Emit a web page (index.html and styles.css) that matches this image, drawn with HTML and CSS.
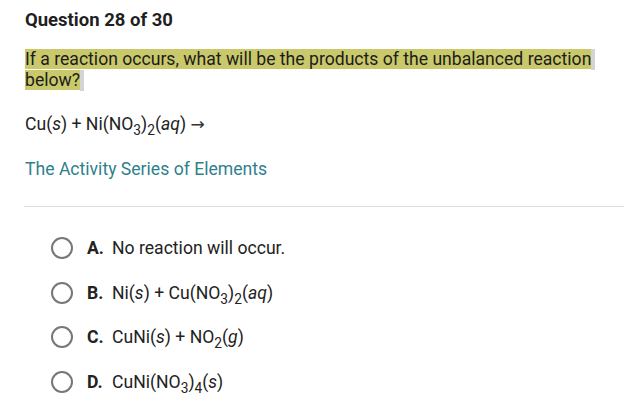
FILE: index.html
```html
<!DOCTYPE html>
<html>
<head>
<meta charset="utf-8">
<link rel="stylesheet" href="styles.css">
</head>
<body>
<div class="page">
  <h1 class="title">Question 28 of 30</h1>
  <p class="prompt"><span class="hl">If a reaction occurs, what will be the products of the unbalanced reaction</span><span class="tail"></span><br><span class="hl">below?</span><span class="tail"></span></p>
  <p class="eq">Cu(<i>s</i>) + Ni(NO<sub>3</sub>)<sub>2</sub>(<i>aq</i>) <span class="arrow">→</span></p>
  <p class="link">The Activity Series of Elements</p>
</div>
<hr class="divider">
<ul class="options">
  <li class="opt"><span class="radio"></span><b class="letter">A.</b><span>No reaction will occur.</span></li>
  <li class="opt"><span class="radio"></span><b class="letter">B.</b><span>Ni(<i>s</i>) + Cu(NO<sub>3</sub>)<sub>2</sub>(<i>aq</i>)</span></li>
  <li class="opt"><span class="radio"></span><b class="letter">C.</b><span>CuNi(<i>s</i>) + NO<sub>2</sub>(<i>g</i>)</span></li>
  <li class="opt"><span class="radio"></span><b class="letter">D.</b><span>CuNi(NO<sub>3</sub>)<sub>4</sub>(<i>s</i>)</span></li>
</ul>
</body>
</html>
```
FILE: styles.css
```css
html, body {
  margin: 0;
  padding: 0;
  background: #fff;
}
body {
  font-family: Roboto, "Noto Sans", sans-serif;
  color: #222;
  width: 624px;
  height: 420px;
  overflow: hidden;
}
.page {
  padding: 9px 0 0 25px;
}
.title {
  margin: 0;
  font-size: 18.5px;
  line-height: 22px;
  font-weight: 700;
  color: #1f1f1f;
}
.prompt {
  margin: 18px 0 0;
  font-size: 17.6px;
  line-height: 21px;
  color: #1c1c1c;
}
.hl {
  background: #c9c96b;
}
.tail {
  display: inline-block;
  width: 4px;
  height: 21px;
  background: #d4d4d2;
  vertical-align: top;
}
.eq {
  margin: 22px 0 0;
  font-size: 17.6px;
  line-height: 22px;
  color: #222;
}
i {
  font-style: italic;
}
sub {
  font-size: 0.78em;
  line-height: 0;
  vertical-align: -0.38em;
}
.arrow {
  font-family: "DejaVu Sans", sans-serif;
  font-size: 17px;
  color: #333;
}
.link {
  margin: 23px 0 0;
  font-size: 17.6px;
  line-height: 22px;
  color: #2f7f8d;
}
.divider {
  margin: 26px 0 0 24px;
  border: 0;
  border-top: 1px solid #dcdcdc;
  height: 0;
}
.options {
  list-style: none;
  margin: 0;
  padding: 30px 0 0 51px;
  display: flex;
  flex-direction: column;
  gap: 22.7px;
}
.opt {
  display: flex;
  align-items: center;
  height: 22px;
  font-size: 17.6px;
  color: #222;
}
.radio {
  width: 18px;
  height: 18px;
  border: 2px solid #777;
  border-radius: 50%;
  margin-right: 14px;
  flex: none;
}
.letter {
  width: 25px;
  font-weight: 700;
}
```
